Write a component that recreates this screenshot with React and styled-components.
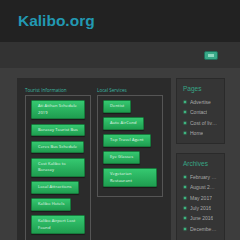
import React from 'react';
import styled, { createGlobalStyle } from 'styled-components';

const GlobalStyle = createGlobalStyle`
    html, body {
        margin: 0;
        padding: 0;
        background: #3d3d3d;
        font-family: 'Open Sans', 'Liberation Sans', sans-serif;
    }
`;

const Page = styled.div`
    width: 240px;
    height: 240px;
    overflow: hidden;
    background: #3d3d3d;
`;

const Header = styled.header`
    height: 42px;
    background: #222;
    display: flex;
    align-items: center;
    padding-left: 18px;
`;

const SiteTitle = styled.h1`
    margin: 0;
    font-family: 'Liberation Sans', Arial, sans-serif;
    font-weight: bold;
    font-size: 15.5px;
    color: #2299b2;
`;

const NavBar = styled.nav`
    height: 26px;
    background: #333;
    display: flex;
    align-items: center;
    justify-content: flex-end;
    padding-right: 22px;
`;

const MenuToggle = styled.button`
    width: 14px;
    height: 9px;
    padding: 0;
    border: 1px solid #1f6f5a;
    border-radius: 2px;
    background: #38a888;
    display: flex;
    align-items: center;
    justify-content: center;

    span {
        display: block;
        width: 6px;
        height: 3px;
        background: #8fd8c0;
    }
`;

const Content = styled.div`
    display: flex;
    align-items: flex-start;
    gap: 5px;
    padding: 10px 0 0 17px;
`;

const Main = styled.main`
    width: 154px;
    height: 170px;
    box-sizing: border-box;
    background: #2b2b2b;
    padding: 9px 8px 0;
    display: flex;
    align-items: flex-start;
    gap: 6px;
`;

const Column = styled.section`
    width: 66px;
    display: flex;
    flex-direction: column;
`;

const ColumnTitle = styled.h3`
    margin: 0 0 2px;
    font-size: 4.6px;
    line-height: 6px;
    font-weight: normal;
    color: #3cb9a3;
    white-space: nowrap;
`;

const ButtonBox = styled.div`
    border: 1px solid #555;
    padding: 4px 5px ${(p) => (p.$open ? '200px' : '9px')};
    display: flex;
    flex-direction: column;
    align-items: flex-start;
    gap: 4.5px;
`;

/* labels carry their own line breaks; two-line buttons fill the column */
const LinkButton = styled.a`
    display: block;
    box-sizing: border-box;
    width: ${(p) => (p.$full ? '100%' : 'auto')};
    padding: 2px 6px;
    font-size: 4px;
    letter-spacing: 0.15px;
    line-height: 6.5px;
    white-space: pre;
    color: #eaf7ee;
    background: linear-gradient(#35c870, #1f9e50);
    border: 1px solid #177a3c;
    border-radius: 1px;
    box-shadow: 0 1px 1px rgba(0, 0, 0, 0.4);
`;

const Sidebar = styled.aside`
    width: 49px;
    display: flex;
    flex-direction: column;
    gap: 9px;
`;

const Widget = styled.div`
    box-sizing: border-box;
    height: ${(p) => p.$height}px;
    background: #353535;
    border: 1px solid #2a2a2a;
    padding: 6px 7px 0 6px;
`;

const WidgetTitle = styled.h4`
    margin: 0 0 4px;
    font-family: 'Liberation Sans', Arial, sans-serif;
    font-size: 6.5px;
    line-height: 8px;
    font-weight: normal;
    color: #37a585;
`;

const WidgetList = styled.ul`
    list-style: none;
    margin: 0;
    padding: 0;
`;

const WidgetItem = styled.li`
    display: flex;
    align-items: center;
    height: 10.3px;
    font-family: 'Liberation Sans', Arial, sans-serif;
    font-size: 5px;
    color: #a9a9a9;

    &::before {
        content: '';
        flex: none;
        width: 2px;
        height: 2px;
        margin: 0 4px 0 1px;
        border-radius: 1px;
        background: #3fcf8e;
        box-shadow: 0 0 1px 1px rgba(63, 207, 142, 0.35);
    }

    span {
        overflow: hidden;
        white-space: nowrap;
        text-overflow: ellipsis;
    }
`;

const tourist = [
    'Ati Atihan Schedule\n2019',
    'Boracay Tourist Bus',
    'Ceres Bus Schedule',
    'Cost Kalibo to\nBoracay',
    'Local Attractions',
    'Kalibo Hotels',
    'Kalibo Airport Lost\nFound',
];

const services = [
    'Dentist',
    'Auto AirCond',
    'Top Travel Agent',
    'Eye Glasses',
    'Vegetarian\nRestaurant',
];

const pages = ['Advertise', 'Contact', 'Cost of living in Kalibo', 'Home'];

const archives = [
    'February 2020',
    'August 2019',
    'May 2017',
    'July 2016',
    'June 2016',
    'December 2015',
];

function App() {
    return (
        <Page>
            <GlobalStyle />
            <Header>
                <SiteTitle>Kalibo.org</SiteTitle>
            </Header>
            <NavBar>
                <MenuToggle aria-label="Menu">
                    <span />
                </MenuToggle>
            </NavBar>
            <Content>
                <Main>
                    <Column>
                        <ColumnTitle>Tourist Information</ColumnTitle>
                        <ButtonBox $open>
                            {tourist.map((item) => (
                                <LinkButton
                                    key={item}
                                    $full={item.includes('\n')}
                                >
                                    {item}
                                </LinkButton>
                            ))}
                        </ButtonBox>
                    </Column>
                    <Column>
                        <ColumnTitle>Local Services</ColumnTitle>
                        <ButtonBox>
                            {services.map((item) => (
                                <LinkButton
                                    key={item}
                                    $full={item.includes('\n')}
                                >
                                    {item}
                                </LinkButton>
                            ))}
                        </ButtonBox>
                    </Column>
                </Main>
                <Sidebar>
                    <Widget $height={66}>
                        <WidgetTitle>Pages</WidgetTitle>
                        <WidgetList>
                            {pages.map((item) => (
                                <WidgetItem key={item}>
                                    <span>{item}</span>
                                </WidgetItem>
                            ))}
                        </WidgetList>
                    </Widget>
                    <Widget $height={100}>
                        <WidgetTitle>Archives</WidgetTitle>
                        <WidgetList>
                            {archives.map((item) => (
                                <WidgetItem key={item}>
                                    <span>{item}</span>
                                </WidgetItem>
                            ))}
                        </WidgetList>
                    </Widget>
                </Sidebar>
            </Content>
        </Page>
    );
}

export default App;
